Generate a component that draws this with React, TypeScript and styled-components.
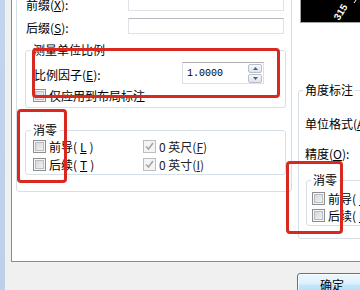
import React from "react";
import styled, { createGlobalStyle } from "styled-components";

const GlobalStyle = createGlobalStyle`
  html, body {
    margin: 0;
    padding: 0;
    background: #f0f0f0;
  }
  body {
    font-family: "Noto Sans CJK SC", "Liberation Sans", sans-serif;
    font-size: 12px;
    color: #000;
  }
`;

const Screen = styled.div`
  position: relative;
  width: 360px;
  height: 290px;
  overflow: hidden;
  display: flex;
  background: #f0f0f0;
`;

const DesktopEdge = styled.div`
  width: 5px;
  flex: none;
  background: linear-gradient(#c2d5ec, #bcd0e8);
`;

const Dialog = styled.div`
  flex: 1;
  min-width: 0;
  display: flex;
  flex-direction: column;
  padding-left: 6px;
`;

const TabPage = styled.div`
  height: 261px;
  flex: none;
  display: flex;
  align-items: flex-start;
  overflow: hidden;
  background: #fff;
  border-left: 1px solid #898c95;
  border-bottom: 1px solid #898c95;
`;

const GroupBox = styled.fieldset<{ $gap?: number; $left?: number; $width?: number }>`
  box-sizing: border-box;
  margin: ${p => p.$gap || 0}px 0 0 ${p => p.$left || 0}px;
  padding: 0;
  min-width: 0;
  width: ${p => (p.$width ? `${p.$width}px` : "auto")};
  flex: none;
  border: 1px solid #d5dfe5;
  border-radius: 3px;
`;

const GroupTitle = styled.legend<{ $indent: number }>`
  margin-left: ${p => p.$indent}px;
  padding: 0 2px;
  line-height: 14px;
  font-size: 12px;
  white-space: nowrap;
`;

const LinearGroup = styled(GroupBox)`
  margin: -12px 0 0 4px;
  width: 276px;
  padding: 6px 5px 16px 8px;
`;

const FieldRow = styled.div<{ $gap?: number }>`
  display: flex;
  align-items: center;
  height: 16px;
  margin-top: ${p => p.$gap || 0}px;
  padding-left: 1px;
`;

const FieldLabel = styled.span<{ $width: number }>`
  width: ${p => p.$width}px;
  flex: none;
  line-height: 14px;
  padding-top: 3px;
  white-space: nowrap;
`;

const Key = styled.span`
  text-decoration: underline;
`;

const TextBox = styled.div`
  box-sizing: border-box;
  width: 156px;
  height: 16px;
  flex: none;
  background: #fff;
  border: 1px solid #dfe3e8;
  border-top-color: #b5b9c0;
`;

const ScaleBody = styled.div`
  padding: 5px 0 5px 8px;
`;

const SpinRow = styled.div`
  display: flex;
  align-items: center;
  height: 22px;
`;

const SpinBox = styled.div`
  box-sizing: border-box;
  width: 82px;
  height: 22px;
  flex: none;
  display: flex;
  align-items: center;
  justify-content: space-between;
  padding: 0 1px 0 4px;
  border: 1px solid #dde1e7;
  border-top-color: #abadb3;
  background: #fff;
`;

const SpinValue = styled.span`
  font-family: "Liberation Mono", "DejaVu Sans Mono", monospace;
  font-size: 10px;
  padding-top: 1px;
`;

const SpinButtons = styled.div`
  display: flex;
  flex-direction: column;
  gap: 1px;
`;

const SpinButton = styled.div`
  box-sizing: border-box;
  width: 14px;
  height: 9px;
  display: flex;
  align-items: center;
  justify-content: center;
  border: 1px solid #b8c0cc;
  border-radius: 2px;
  background: linear-gradient(#f7f8fa, #dfe4ea);
`;

const CheckRow = styled.label<{ $gap?: number; $shift?: number }>`
  display: flex;
  align-items: center;
  gap: 3px;
  height: 13px;
  margin-top: ${p => p.$gap || 0}px;
  margin-left: ${p => p.$shift || 0}px;
  line-height: 14px;
  white-space: nowrap;
`;

const Box = styled.span<{ $disabled?: boolean }>`
  box-sizing: border-box;
  width: 13px;
  height: 13px;
  flex: none;
  display: flex;
  align-items: center;
  justify-content: center;
  border: 1px solid ${p => (p.$disabled ? "#bdbdbd" : "#8e8f8f")};
  background: ${p => (p.$disabled ? "#f4f4f4" : "linear-gradient(135deg, #cdd1d6, #f8f8f8)")};
  box-shadow: ${p => (p.$disabled ? "none" : "inset 0 0 0 1px #f4f4f4, inset 0 0 0 2px #b9bdc3")};
`;

const ZeroBody = styled.div`
  display: grid;
  grid-template-columns: 110px auto;
  row-gap: 5px;
  padding: 3px 0 3px 7px;
`;

const DimText = styled.span`
  color: #222;
`;

const SideColumn = styled.div`
  display: flex;
  flex-direction: column;
  flex: none;
  margin-left: 1px;
`;

const Preview = styled.div`
  box-sizing: border-box;
  width: 70px;
  height: 33px;
  margin: -10px 0 0 7px;
  border: 1px solid #a3a3a3;
  border-right: none;
  background: #000;
`;

const AngleBody = styled.div`
  padding: 20px 0 12px 6px;
`;

const PlainLine = styled.div<{ $gap?: number }>`
  line-height: 14px;
  margin-top: ${p => p.$gap || 0}px;
  white-space: nowrap;
`;

const AngleZeroBody = styled.div`
  display: flex;
  flex-direction: column;
  gap: 4px;
  padding: 5px 0 3px 5px;
`;

const Footer = styled.div`
  flex: 1;
  display: flex;
  justify-content: flex-end;
  align-items: flex-start;
  padding-top: 11px;
`;

const PushButton = styled.button`
  width: 70px;
  height: 23px;
  margin-right: -7px;
  padding: 0;
  border: 1px solid #3c7fb1;
  border-radius: 3px;
  background: linear-gradient(#edf7fd 0%, #dcf0fc 48%, #c3e6fb 52%, #aedcf6 100%);
  box-shadow: inset 0 0 0 1px rgba(255, 255, 255, 0.7);
  font-family: "Noto Sans CJK SC", sans-serif;
  font-size: 12px;
  line-height: 14px;
  color: #000;
`;

const Callout = styled.div<{ $x: number; $y: number; $w: number; $h: number }>`
  position: absolute;
  left: ${p => p.$x}px;
  top: ${p => p.$y}px;
  width: ${p => p.$w}px;
  height: ${p => p.$h}px;
  box-sizing: border-box;
  border: 3px solid #d8281f;
  border-radius: 4px;
  pointer-events: none;
`;

const Check = ({ disabled = false }: { disabled?: boolean }) => (
  <Box $disabled={disabled}>
    {disabled && (
      <svg width="9" height="9" viewBox="0 0 9 9">
        <path d="M1 4.5 L3.5 7 L8 1" fill="none" stroke="#a6a6a6" strokeWidth="1.6" />
      </svg>
    )}
  </Box>
);

const Arrow = ({ up }: { up?: boolean }) => (
  <svg width="5" height="3" viewBox="0 0 5 3">
    <path d={up ? "M0 3 L2.5 0 L5 3 Z" : "M0 0 L2.5 3 L5 0 Z"} fill="#4d5f80" />
  </svg>
);

export default function App() {
  return (
    <>
      <GlobalStyle />
      <Screen>
        <DesktopEdge />
        <Dialog>
          <TabPage>
            <LinearGroup as="div">
              <FieldRow>
                <FieldLabel $width={102}>前缀(<Key>X</Key>):</FieldLabel>
                <TextBox />
              </FieldRow>
              <FieldRow $gap={7}>
                <FieldLabel $width={102}>后缀(<Key>S</Key>):</FieldLabel>
                <TextBox />
              </FieldRow>

              <GroupBox $gap={9} $width={261}>
                <GroupTitle $indent={5}>测量单位比例</GroupTitle>
                <ScaleBody>
                  <SpinRow>
                    <FieldLabel $width={148}>比例因子(<Key>E</Key>):</FieldLabel>
                    <SpinBox>
                      <SpinValue>1.0000</SpinValue>
                      <SpinButtons>
                        <SpinButton><Arrow up /></SpinButton>
                        <SpinButton><Arrow /></SpinButton>
                      </SpinButtons>
                    </SpinBox>
                  </SpinRow>
                  <CheckRow $gap={5} $shift={-1}>
                    <Check />
                    仅应用到布局标注
                  </CheckRow>
                </ScaleBody>
              </GroupBox>

              <GroupBox $gap={15} $width={261}>
                <GroupTitle $indent={5}>消零</GroupTitle>
                <ZeroBody>
                  <CheckRow>
                    <Check />
                    前导(<Key>L</Key>)
                  </CheckRow>
                  <CheckRow>
                    <Check disabled />
                    <DimText>0 英尺(<Key>F</Key>)</DimText>
                  </CheckRow>
                  <CheckRow>
                    <Check />
                    后续(<Key>T</Key>)
                  </CheckRow>
                  <CheckRow>
                    <Check disabled />
                    <DimText>0 英寸(<Key>I</Key>)</DimText>
                  </CheckRow>
                </ZeroBody>
              </GroupBox>
            </LinearGroup>

            <SideColumn>
              <Preview>
                <svg width="69" height="32" viewBox="0 0 69 32">
                  <path d="M53 12 L60 2" stroke="#fff" strokeWidth="1" />
                  <text
                    x="0"
                    y="0"
                    fill="#fff"
                    fontFamily="Liberation Sans, sans-serif"
                    fontSize="10"
                    fontWeight="bold"
                    transform="translate(38 30) rotate(-58)"
                  >
                    315
                  </text>
                </svg>
              </Preview>
              <GroupBox $gap={60} $left={5} $width={80}>
                <GroupTitle $indent={4}>角度标注</GroupTitle>
                <AngleBody>
                  <PlainLine>单位格式(<Key>A</Key>):</PlainLine>
                  <PlainLine $gap={16}>精度(<Key>O</Key>):</PlainLine>
                  <GroupBox $gap={12} $left={1} $width={70}>
                    <GroupTitle $indent={4}>消零</GroupTitle>
                    <AngleZeroBody>
                      <CheckRow>
                        <Check />
                        前导(<Key>D</Key>)
                      </CheckRow>
                      <CheckRow>
                        <Check />
                        后续(<Key>N</Key>)
                      </CheckRow>
                    </AngleZeroBody>
                  </GroupBox>
                </AngleBody>
              </GroupBox>
            </SideColumn>
          </TabPage>
          <Footer>
            <PushButton>确定</PushButton>
          </Footer>
        </Dialog>

        <Callout $x={32} $y={48} $w={248} $h={50} />
        <Callout $x={17} $y={109} $w={50} $h={74} />
        <Callout $x={286} $y={161} $w={57} $h={73} />
      </Screen>
    </>
  );
}
